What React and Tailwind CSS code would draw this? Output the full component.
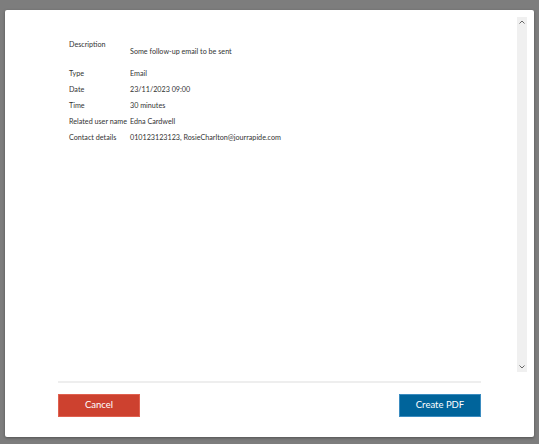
export default function App() {
  const rows = [
    ["Type", "Email"],
    ["Date", "23/11/2023 09:00"],
    ["Time", "30 minutes"],
    ["Related user name", "Edna Cardwell"],
    ["Contact details", "010123123123, RosieCharlton@jourrapide.com"],
  ];
  return (
    <div
      className="w-[539px] h-[444px] bg-[#7d7d7d] pt-[10px] pl-[5px] pr-[5px] pb-[7px] overflow-hidden"
      style={{ fontFamily: 'Lato, "Open Sans", sans-serif' }}
    >
      <div className="w-[529px] h-[427px] bg-white rounded-[2px] shadow-[0_1px_3px_rgba(0,0,0,0.35)] flex flex-col pt-[7px]">
        <div className="flex h-[355px] pr-[7px]">
          <div className="flex-1 pt-[23px] pl-[64px] text-[7.2px] text-[#333]">
            <div className="flex h-[16px] mb-[10px]">
              <div className="w-[61px] leading-[10px]">Description</div>
              <div className="pt-[7px] leading-[10px]">Some follow-up email to be sent</div>
            </div>
            {rows.map(([k, v]) => (
              <div key={k} className="flex h-[16px] items-center">
                <div className="w-[61px] whitespace-nowrap">{k}</div>
                <div className="whitespace-nowrap">{v}</div>
              </div>
            ))}
          </div>
          <div className="w-[10px] bg-[#f0f0f0] flex flex-col justify-between items-center py-[3px]">
            <svg width="6" height="4" viewBox="0 0 6 4">
              <path d="M0.5 3.5 L3 1 L5.5 3.5" fill="none" stroke="#666" strokeWidth="1" />
            </svg>
            <svg width="6" height="4" viewBox="0 0 6 4">
              <path d="M0.5 0.5 L3 3 L5.5 0.5" fill="none" stroke="#666" strokeWidth="1" />
            </svg>
          </div>
        </div>
        <div className="px-[53px] pt-[9px]">
          <div className="h-[2px] bg-[#eeeeee]" />
          <div className="flex justify-between mt-[11px]">
            <button className="w-[82px] h-[23px] bg-[#cd412f] text-white text-[9.5px] border border-[#e0604f]">
              Cancel
            </button>
            <button className="w-[82px] h-[23px] bg-[#00649b] text-white text-[9.5px] border border-[#3b8cc0]">
              Create PDF
            </button>
          </div>
        </div>
      </div>
    </div>
  );
}
